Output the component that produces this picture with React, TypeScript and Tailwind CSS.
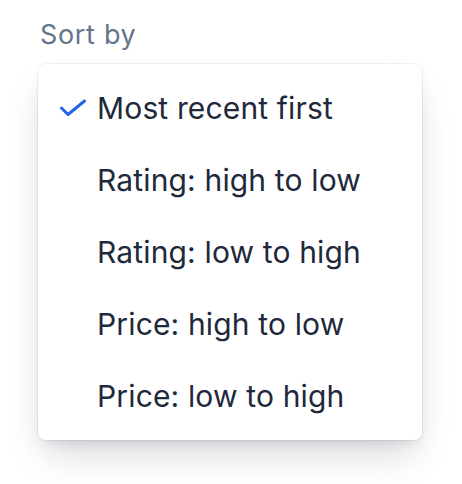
const options = [
  "Most recent first",
  "Rating: high to low",
  "Rating: low to high",
  "Price: high to low",
  "Price: low to high",
];

export default function App() {
  const selected = 0;
  return (
    <div
      className="w-[462px] h-[484px] bg-white pt-[19px] pl-[38px]"
      style={{ fontFamily: "Inter, 'Noto Sans', sans-serif" }}
    >
      <div className="pl-[2px] text-[27px] leading-[32px] tracking-[0.025em] text-[#64748b]">Sort by</div>
      <div className="mt-[13px] w-[384px] rounded-lg bg-white py-2 shadow-[0_20px_35px_-8px_rgba(15,23,42,0.18),0_6px_12px_-4px_rgba(15,23,42,0.1)] ring-1 ring-black/5">
        {options.map((opt, i) => (
          <div key={opt} className="h-[72px] flex items-center">
            <div className="w-[59px] flex justify-end pr-[10px]">
              {i === selected && (
                <svg width="28" height="18" viewBox="0 0 28 18" fill="none">
                  <path
                    d="M2.5 9 L9 15.5 L25.5 2"
                    stroke="#2563eb"
                    strokeWidth="3"
                    strokeLinecap="round"
                    strokeLinejoin="round"
                  />
                </svg>
              )}
            </div>
            <span className="text-[30px] leading-[36px] tracking-[0.005em] text-[#1e293b]">{opt}</span>
          </div>
        ))}
      </div>
    </div>
  );
}
